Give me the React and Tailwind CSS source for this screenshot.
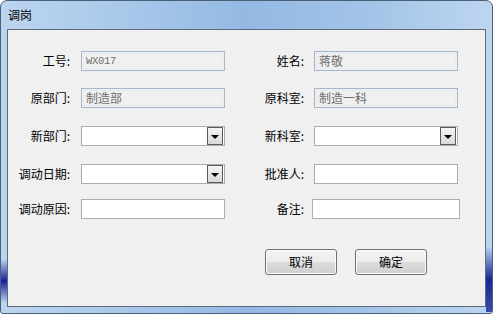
import React from 'react';

const font = { fontFamily: '"Noto Sans CJK SC", "Liberation Sans", sans-serif' };

const Label = ({ children, w }) => (
  <div className={`${w} h-5 flex items-center justify-end text-[12px] leading-none text-black`}>
    {children}
  </div>
);

const ReadOnlyInput = ({ value, mono }) => (
  <div className="w-[144px] h-5 border border-[#a7b6cb] bg-[#f0f0f0] p-px">
    <div
      className={`h-full border border-[#e4ebf3] flex items-center pl-[2px] text-[#6d6d6d] leading-none ${
        mono ? 'text-[10.5px] tracking-[-0.3px]' : 'text-[12px]'
      }`}
      style={mono ? { fontFamily: '"Liberation Mono", monospace' } : undefined}
    >
      {value}
    </div>
  </div>
);

const TextInput = ({ w = 'w-[144px]' }) => (
  <div className={`${w} h-5 border border-[#abadb3] bg-white`} />
);

const Combo = () => (
  <div className="w-[144px] h-5 border border-[#acacac] bg-white flex justify-end items-center pr-px">
    <div className="w-4 h-[18px] border border-[#5b5b5b] bg-gradient-to-b from-[#f4f4f4] to-[#d8d8d8] flex items-center justify-center">
      <div className="w-0 h-0 border-l-[4px] border-r-[4px] border-t-[4px] border-l-transparent border-r-transparent border-t-black mt-px" />
    </div>
  </div>
);

const Button = ({ children }) => (
  <button className="w-[72px] h-[26px] rounded-[3px] border border-[#707070] bg-[linear-gradient(to_bottom,#f3f3f3_0%,#ebebeb_50%,#dddddd_50%,#cfcfcf_100%)] shadow-[inset_0_0_0_1px_#fcfcfc] text-[12px] leading-none text-black flex items-center justify-center">
    {children}
  </button>
);

export default function App() {
  return (
    <div className="w-[493px] h-[314px] bg-white" style={font}>
      <div className="relative w-[493px] h-[314px] rounded-t-[7px] rounded-b-[3px] border border-[#4a5f78] bg-[linear-gradient(to_right,#bcd5ef_0%,#a9c8ea_25%,#93b9e3_50%,#a3c4e8_75%,#bdd6f0_100%)] flex flex-col overflow-hidden">
        {/* glass reflections on the frame */}
        <div className="absolute left-0 top-[258px] w-[6px] h-[44px] bg-gradient-to-b from-transparent via-[#1a1f9c] to-transparent" />
        <div className="absolute right-0 top-[245px] w-[6px] h-[66px] bg-gradient-to-b from-transparent via-[#1b2598] to-[#3a4aa8]" />

        <div className="h-[28px] flex items-center pl-[7px] text-[12px] text-black leading-none">调岗</div>

        <div className="relative mx-[6px] mb-[6px] flex-1 border border-[#5d6b7c] bg-[#f0f0f0] flex flex-col pl-px">
          <div className="flex flex-col pt-[21px]">
            <div className="flex items-center">
              <Label w="w-[61px]">工号:</Label>
              <div className="ml-[11px]"><ReadOnlyInput value="WX017" mono /></div>
              <Label w="w-[79px]">姓名:</Label>
              <div className="ml-[10px]"><ReadOnlyInput value="蒋敬" /></div>
            </div>

            <div className="flex items-center mt-[17px]">
              <Label w="w-[61px]">原部门:</Label>
              <div className="ml-[11px]"><ReadOnlyInput value="制造部" /></div>
              <Label w="w-[79px]">原科室:</Label>
              <div className="ml-[10px]"><ReadOnlyInput value="制造一科" /></div>
            </div>

            <div className="flex items-center mt-[18px]">
              <Label w="w-[61px]">新部门:</Label>
              <div className="ml-[11px]"><Combo /></div>
              <Label w="w-[79px]">新科室:</Label>
              <div className="ml-[10px]"><Combo /></div>
            </div>

            <div className="flex items-center mt-[18px]">
              <Label w="w-[61px]">调动日期:</Label>
              <div className="ml-[11px]"><Combo /></div>
              <Label w="w-[79px]">批准人:</Label>
              <div className="ml-[10px]"><TextInput /></div>
            </div>

            <div className="flex items-center mt-[15px]">
              <Label w="w-[61px]">调动原因:</Label>
              <div className="ml-[11px]"><TextInput /></div>
              <Label w="w-[79px]">备注:</Label>
              <div className="ml-[8px]"><TextInput w="w-[148px]" /></div>
            </div>
          </div>

          <div className="flex gap-[18px] pl-[256px] mt-[30px]">
            <Button>取消</Button>
            <Button>确定</Button>
          </div>
        </div>
      </div>
    </div>
  );
}
